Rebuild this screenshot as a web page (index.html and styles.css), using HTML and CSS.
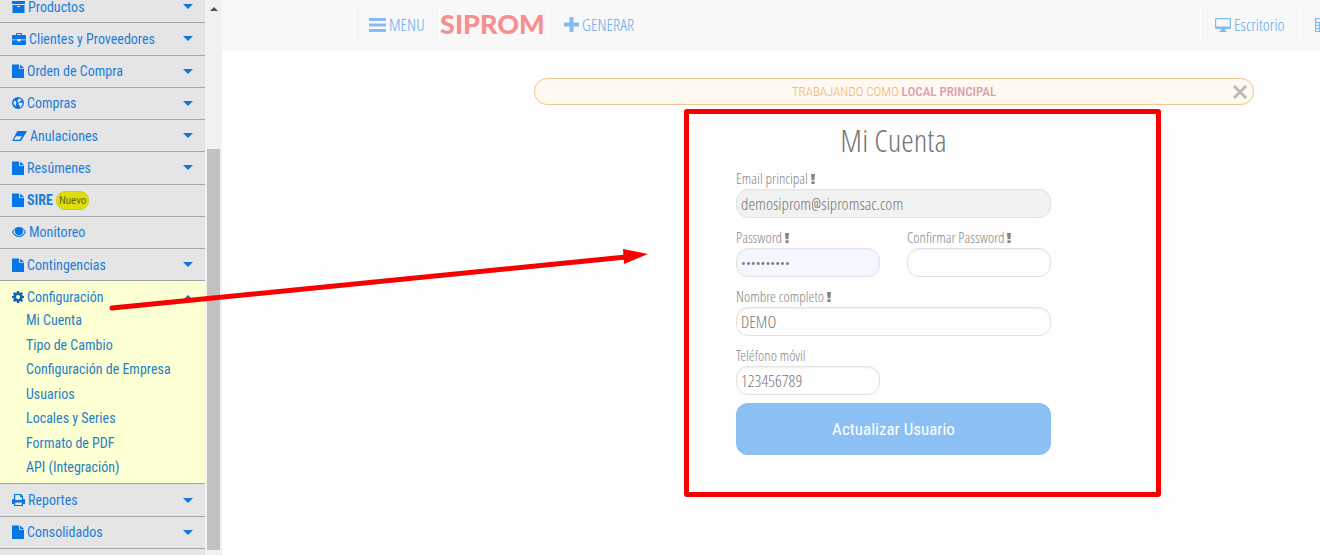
FILE: index.html
```html
<!DOCTYPE html>
<html lang="es">
<head>
<meta charset="utf-8">
<title>SIPROM - Mi Cuenta</title>
<link rel="stylesheet" href="styles.css">
</head>
<body>
<svg class="defs" aria-hidden="true">
  <symbol id="file" viewBox="0 0 12 14"><path d="M0 .5h7v4.300h5V14H0z"/><path d="M8 .5L12 4H8z"/></symbol>
  <symbol id="box" viewBox="0 0 13 14"><path d="M0 1h13v3H0z"/><path fill-rule="evenodd" d="M.5 5h12v8H.5zM5 6v1h3V6z"/></symbol>
  <symbol id="case" viewBox="0 0 14 14"><path fill-rule="evenodd" d="M4 3V2q0-1 1-1h4q1 0 1 1v1h3q1 0 1 1v3.500H8.500V7h-3v.5H0V4q0-1 1-1zM5 3h4V2H5z"/><path d="M0 8.300h5.500v1.200h3V8.300H14V12q0 1-1 1H1q-1 0-1-1z"/></symbol>
  <symbol id="globe" viewBox="0 0 12 14"><path fill-rule="evenodd" d="M6 1a6 6 0 1 0 0 12A6 6 0 0 0 6 1zM7 2.200l2 1 .6 1.600-1.500.3-1 1.400L8.500 7l1.300-.5 1 1-.6 1.800-2 2.200-.7-1.700-1-1.500.4-1.500L5.700 6 5.500 4.300l1-.7zM2.300 4.500l1.200.4 1 1.800-.7 1.500.2 2L2 8.600 1.300 7z"/></symbol>
  <symbol id="eraser" viewBox="0 0 15 14"><path fill-rule="evenodd" d="M6 2h8q1 0 .6 1L9.200 11.400q-.4.600-1.200.600H1q-1 0-.5-1L5 2.600q.4-.6 1-.6zM4 7.200L1.800 10.800H7.600L10 7.200z"/></symbol>
  <symbol id="eye" viewBox="0 0 14 14"><path fill-rule="evenodd" d="M7 2c3 0 5.500 2 7 5-1.500 3-4 5-7 5S1.500 10 0 7c1.500-3 4-5 7-5zM1.200 7c1.200 2.300 3.300 4 5.800 4s4.600-1.700 5.800-4A7 7 0 0 0 10.200 4a4 4 0 1 1-6.400 0A7 7 0 0 0 1.200 7z"/><path fill-rule="evenodd" d="M7 3.500a3 3 0 1 0 0 6 3 3 0 0 0 0-6zM7 4.300v1A1.400 1.400 0 0 0 5.600 6.700h-1A2.400 2.400 0 0 1 7 4.300z"/></symbol>
  <symbol id="gear" viewBox="0 0 12 14"><path fill-rule="evenodd" d="M5 1h2l.3 1.600 1 .4 1.300-1 1.400 1.400-.9 1.300.4 1L12 6v2l-1.500.3-.4 1 .9 1.300L9.600 12l-1.300-.9-1 .4L7 13H5l-.3-1.500-1-.4-1.300.9L1 10.600l.9-1.300-.4-1L0 8V6l1.500-.3.400-1L1 3.400 2.400 2l1.300 1 1-.4zM6 5a2 2 0 1 0 0 4 2 2 0 0 0 0-4z"/></symbol>
  <symbol id="print" viewBox="0 0 13 14"><path fill-rule="evenodd" d="M2 1h7l2 2v3h1q1 0 1 1v4h-2v2H2v-2H0V7q0-1 1-1h1zM3.200 2v5h6.600V4H8V2zM3.200 9.500V12h6.600V9.500z"/></symbol>
  <symbol id="bang" viewBox="0 0 4 10"><path d="M0 0h4l-.6 6.200H.6zM.4 7.200h3.200V10H.4z"/></symbol>
</svg>

<div class="app">
  <nav class="sidebar" aria-label="Principal">
    <div class="menu">
      <a class="item" href="#"><svg class="icon w13"><use href="#box"/></svg>Productos<i class="caret"></i></a>
      <a class="item" href="#"><svg class="icon w14"><use href="#case"/></svg>Clientes y Proveedores<i class="caret"></i></a>
      <a class="item" href="#"><svg class="icon"><use href="#file"/></svg>Orden de Compra<i class="caret"></i></a>
      <a class="item" href="#"><svg class="icon"><use href="#globe"/></svg>Compras<i class="caret"></i></a>
      <a class="item" href="#"><svg class="icon w15"><use href="#eraser"/></svg>Anulaciones<i class="caret"></i></a>
      <a class="item" href="#"><svg class="icon"><use href="#file"/></svg>Resúmenes<i class="caret"></i></a>
      <a class="item" href="#"><svg class="icon"><use href="#file"/></svg><b>SIRE</b><span class="tag">Nuevo</span></a>
      <a class="item" href="#"><svg class="icon w14"><use href="#eye"/></svg>Monitoreo</a>
      <a class="item" href="#"><svg class="icon"><use href="#file"/></svg>Contingencias<i class="caret"></i></a>
      <div class="group">
        <a class="group-head" href="#"><svg class="icon"><use href="#gear"/></svg>Configuración<i class="caret up"></i></a>
        <div class="sub">
          <a href="#">Mi Cuenta</a>
          <a href="#">Tipo de Cambio</a>
          <a href="#">Configuración de Empresa</a>
          <a href="#">Usuarios</a>
          <a href="#">Locales y Series</a>
          <a href="#">Formato de PDF</a>
          <a href="#">API (Integración)</a>
        </div>
      </div>
      <a class="item" href="#"><svg class="icon w13"><use href="#print"/></svg>Reportes<i class="caret"></i></a>
      <a class="item" href="#"><svg class="icon"><use href="#file"/></svg>Consolidados<i class="caret"></i></a>
      <div class="rest"></div>
    </div>
    <div class="track"><i class="track-up"></i><div class="thumb"></div></div>
  </nav>

  <div class="page">
    <header class="topbar">
      <a class="top-item menu-link" href="#"><svg width="17" height="14" viewBox="0 0 17 14"><path d="M0 0h17v3H0zM0 5.500h17v3H0zM0 11h17v3H0z"/></svg>MENU</a>
      <a class="logo" href="#">SIPROM</a>
      <a class="top-item generate" href="#"><svg width="15" height="15" viewBox="0 0 15 15"><path d="M5.500 0h4v5.500H15v4H9.500V15h-4V9.500H0v-4h5.500z"/></svg>GENERAR</a>
      <a class="top-item desk" href="#"><svg width="16" height="14" viewBox="0 0 16 14"><path fill-rule="evenodd" d="M1 0h14q1 0 1 1v9q0 1-1 1h-5v1.500h1.500V14h-7v-1.500H6V11H1q-1 0-1-1V1q0-1 1-1zM1.200 1.200v7.300h13.600V1.200z"/></svg>Escritorio</a>
      <a class="top-item calc" href="#" aria-label="Calculadora"><svg width="14" height="14" viewBox="0 0 14 14"><path fill-rule="evenodd" d="M0 0h14v14H0zM1.200 1.200v2.600h11.600V1.200zM1.200 5v2h2.600V5zM5 5v2h2.600V5zM1.200 8v2h2.600V8zM5 8v2h2.600V8zM1.200 11v2h2.600v-2zM5 11v2h2.600v-2zM9 5v8h3.800V5z"/></svg></a>
    </header>
    <main class="content">
      <div class="notice">
        <p>TRABAJANDO COMO <strong>LOCAL PRINCIPAL</strong></p>
        <button class="close" type="button" aria-label="Cerrar"><svg width="16" height="16" viewBox="0 0 16 16"><path d="M2 2l12 12M14 2L2 14"/></svg></button>
      </div>
      <section class="card">
        <form class="form">
          <h1>Mi Cuenta</h1>
          <div class="field"><label for="email">Email principal <svg class="bang"><use href="#bang"/></svg></label><input id="email" type="email" value="demosiprom@sipromsac.com" disabled></div>
          <div class="pair">
            <div class="field"><label for="pass">Password <svg class="bang"><use href="#bang"/></svg></label><input id="pass" class="filled" type="password" value="demo123456"></div>
            <div class="field"><label for="pass2">Confirmar Password <svg class="bang"><use href="#bang"/></svg></label><input id="pass2" type="password"></div>
          </div>
          <div class="field"><label for="name">Nombre completo <svg class="bang"><use href="#bang"/></svg></label><input id="name" type="text" value="DEMO"></div>
          <div class="pair">
            <div class="field"><label for="phone">Teléfono móvil</label><input id="phone" type="text" value="123456789"></div>
          </div>
          <button class="submit" type="submit">Actualizar Usuario</button>
        </form>
      </section>
    </main>
  </div>
  <svg class="arrow" width="550" height="70" viewBox="0 0 550 70" aria-hidden="true"><path d="M12 63L526 12" stroke="#f60000" stroke-width="5" stroke-linecap="round"/><path d="M523 4l25 5-24 10z" fill="#f60000"/></svg>
</div>
</body>
</html>
```
FILE: styles.css
```css
* { box-sizing: border-box; }
body {
  margin: 0;
  background: #fefefe;
  color: #777;
  font-family: "Open Sans Condensed Light", "Roboto Condensed", sans-serif;
  font-size: 17px;
  overflow: hidden;
}
a { color: inherit; text-decoration: none; }
button, input { font: inherit; color: inherit; }
.defs { display: none; }
.app { position: relative; display: flex; height: 100vh; overflow: hidden; }

.sidebar { flex: none; width: 222px; display: flex; overflow: hidden; color: #1e7dd8; font-family: "Roboto Condensed", sans-serif; font-size: 14px; }
.menu { flex: 1; display: flex; flex-direction: column; height: calc(100vh + 9px); margin-top: -9px; background: #e5e5e5; }
.item { flex: 1 0 32px; display: flex; align-items: center; padding: 0 12px; border-bottom: 1px solid #a5a5a5; white-space: nowrap; }
.rest { flex: none; height: 6px; }
.icon { flex: none; width: 12px; height: 14px; margin-right: 3px; fill: #0575e8; }
.w13 { width: 13px; }
.w14 { width: 14px; }
.w15 { width: 15px; }
.caret { margin-left: auto; border: 5px solid transparent; border-top-color: #1376dc; border-bottom: 0; }
.caret.up { border-top: 0; border-bottom: 5px solid #1a6cb8; }
.tag { margin-left: 3px; padding: 0 2px; border: 1px solid #cfc92a; border-radius: 9px; background: #dede08; color: #68661a; font-size: 11px; line-height: 17px; }
.group { flex: 11 0 200px; display: flex; flex-direction: column; padding-bottom: 3px; border-bottom: 1px solid #a5a5a5; background: #fbffd2; }
.group-head { display: flex; align-items: center; height: 28px; padding: 4px 12px 0; }
.group-head .icon { fill: #0f66b8; }
.sub { flex: 1; display: flex; flex-direction: column; padding-left: 26px; color: #2a80c4; }
.sub a { flex: 1; line-height: 23px; }
.track { width: 17px; display: flex; flex-direction: column; align-items: center; background: #f1f1f1; }
.track-up { margin-top: 7px; border: 4px solid transparent; border-bottom-color: #505050; border-top: 0; }
.thumb { width: 13px; height: 401px; margin: auto 0 5px; background: #c1c1c1; }

.page { flex: 1; min-width: 0; }
.topbar { display: flex; align-items: center; height: 51px; padding-left: 132px; overflow: hidden; background: #f8f8f8; color: #64a9ee; }
.top-item, .logo { flex: none; display: flex; align-items: center; height: 35px; border-left: 1px solid #fff; }
.top-item { padding-bottom: 2px; }
.top-item svg { margin-right: 3px; fill: #85bbf3; }
.menu-link { width: 85px; padding-left: 14px; }
.logo { width: 110px; color: #f78f91; font: 900 27px Lato, sans-serif; line-height: 30px; padding-bottom: 3px; border-right: 1px solid #fff; }
.generate { padding-left: 15px; border: 0; }
.desk { width: 100px; margin-left: auto; padding-left: 14px; }
.calc { width: 20px; padding-left: 14px; overflow: hidden; }
.calc svg { flex: none; }

.content { padding: 27px 0 0 312px; }
.notice { display: flex; align-items: center; max-width: 720px; height: 27px; margin-bottom: 4px; padding: 0 5px; border: 1px solid #f0c592; border-radius: 13px; background: #fff9f1; }
.notice p { flex: 1; margin: 0; padding-left: 16px; text-align: center; color: #eeb368; font-family: "Roboto Condensed", sans-serif; font-weight: 300; font-size: 13px; line-height: 22px; }
.notice strong { color: #dd9dab; font-weight: 500; }
.close { display: flex; padding: 0; border: 0; background: none; }
.close svg { stroke: #bdbab6; stroke-width: 3; }
.card { max-width: 477px; margin-left: 150px; padding: 0 0 37px 47px; border: 5px solid #f60000; border-radius: 3px; }
.form { max-width: 315px; display: flex; flex-direction: column; gap: 8px; }
h1 { margin: 0 0 -8px; padding-bottom: 2px; font-size: 32px; font-weight: 400; line-height: 51px; text-align: center; }
.field { display: flex; flex-direction: column; }
.pair { display: grid; grid-template-columns: 1fr 1fr; gap: 27px; }
label { font-size: 15px; line-height: 22px; color: #888; white-space: nowrap; }
.bang { width: 4px; height: 10px; fill: #858585; }
input { width: 100%; min-width: 0; height: 29px; padding: 0 4px; border: 1px solid #e2e2e2; border-radius: 12px; background: #fefefe; box-shadow: inset 0 1px 2px #eee; }
input:disabled { background: #f2f2f2; color: #777; }
input.filled { background: #f3f7ff; }
input[type="password"] { font-family: "Open Sans", sans-serif; font-size: 13px; }
.submit { height: 52px; border: 0; border-radius: 12px; background: #8cc0f5; color: #fff; font-family: "Roboto Condensed", sans-serif; font-size: 17px; }

.arrow { position: absolute; left: 100px; top: 245px; pointer-events: none; }
```
